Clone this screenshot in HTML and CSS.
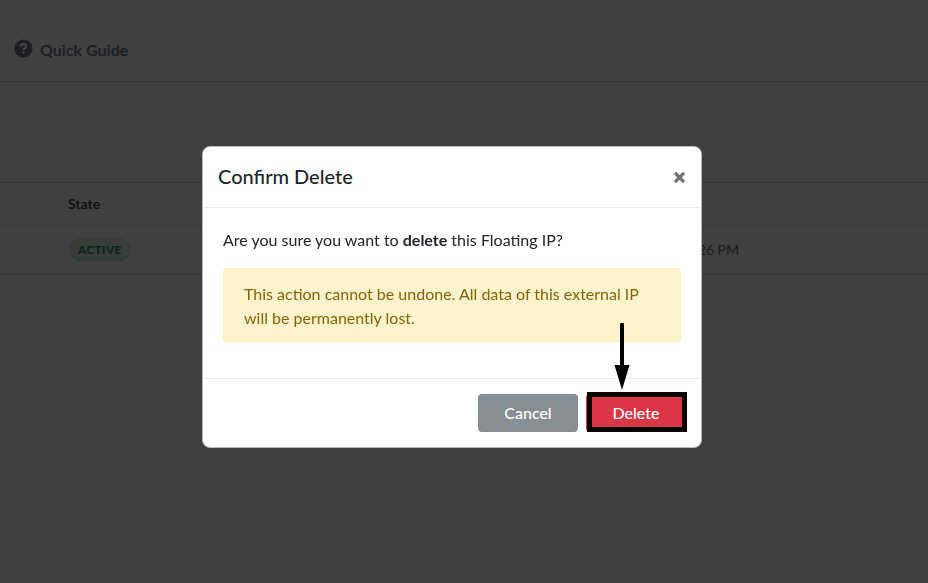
FILE: index.html
```html
<!DOCTYPE html>
<html lang="en">
<head>
    <meta charset="UTF-8">
    <meta name="viewport" content="width=device-width, initial-scale=1.0">
    <title>Floating IP</title>
    <link rel="stylesheet" href="styles.css">
</head>
<body>
    <header class="top-bar">
        <a class="guide-link" href="#">
            <svg class="guide-icon" viewBox="0 0 20 20" aria-hidden="true">
                <circle cx="10" cy="10" r="9.500" fill="#1c1e21"/>
                <path d="M7.300 8a2.700 2.700 0 0 1 5.400-.2c0 1.700-2.700 1.900-2.700 3.600" fill="none" stroke="#4a4a4a" stroke-width="2"/>
                <circle cx="10" cy="14.300" r="1.200" fill="#4a4a4a"/>
            </svg>
            Quick Guide
        </a>
    </header>

    <section class="ip-table">
        <div class="ip-row ip-head">
            <span>State</span>
        </div>
        <div class="ip-row">
            <span class="state-pill">ACTIVE</span>
            <span class="ip-date">Jan 12, 2024, 12:26 PM</span>
        </div>
    </section>

    <div class="modal-layer">
        <div class="modal">
            <div class="modal-header">
                <h2>Confirm Delete</h2>
                <button class="close-btn" type="button" aria-label="Close">
                    <svg viewBox="0 0 12 12" aria-hidden="true">
                        <path d="M1.800 1.800l8.400 8.400M10.200 1.800l-8.400 8.400" stroke="#6f7276" stroke-width="3"/>
                    </svg>
                </button>
            </div>
            <div class="modal-body">
                <p>Are you sure you want to <strong>delete</strong> this Floating IP?</p>
                <div class="alert">This action cannot be undone. All data of this external IP will be permanently lost.</div>
            </div>
            <div class="modal-footer">
                <button class="btn btn-cancel" type="button">Cancel</button>
                <button class="btn btn-delete" type="button">Delete</button>
                <svg class="arrow" viewBox="0 0 16 68" aria-hidden="true">
                    <path d="M8 1.500V46" stroke="#000" stroke-width="4" stroke-linecap="round"/>
                    <path d="M0.500 42H15.500L8 67z" fill="#000"/>
                </svg>
            </div>
        </div>
    </div>
</body>
</html>
```

FILE: styles.css
```css
*, *::before, *::after
{
    box-sizing: border-box;
    margin: 0;
    padding: 0;
}
html, body
{
    height: 100%;
}
body
{
    background-color: #404040;
    font-family: "Lato", "Liberation Sans", sans-serif;
    overflow: hidden;
}
.top-bar
{
    height: 82px;
    padding: 18px 14px 0;
    display: flex;
    align-items: center;
    border-bottom: 1px solid #353535;
}
.guide-link
{
    display: flex;
    align-items: center;
    gap: 7px;
    color: #1c1e22;
    font-size: 16px;
    font-weight: 700;
    text-decoration: none;
}
.guide-icon
{
    width: 19px;
    height: 19px;
    margin-top: -2px;
}
.ip-table
{
    margin-top: 100px;
    border-top: 1px solid #353535;
    border-bottom: 1px solid #353535;
}
.ip-row
{
    display: flex;
    align-items: center;
    justify-content: space-between;
    height: 48px;
    padding: 0 189px 2px 68px;
    color: #101112;
    font-size: 14px;
}
.ip-head
{
    height: 43px;
    border-bottom: 1px solid #3a3a3a;
    font-weight: 700;
}
.state-pill
{
    margin-left: 1px;
    padding: 4px 9px;
    border-radius: 12px;
    background-color: #363c38;
    color: #0a2014;
    font-size: 12px;
    font-weight: 700;
    letter-spacing: 0.3px;
}
.ip-date
{
    color: #1a1b1c;
}
.modal-layer
{
    position: fixed;
    inset: 0;
    padding: 146px 24px 0 0;
    display: flex;
    justify-content: center;
    align-items: flex-start;
}
.modal
{
    width: 500px;
    height: 302px;
    display: flex;
    flex-direction: column;
    background-color: #fff;
    border: 1px solid #b8b8b8;
    border-radius: 8px;
}
.modal-header
{
    height: 61px;
    padding: 0 15px 3px;
    display: flex;
    align-items: center;
    justify-content: space-between;
    border-bottom: 1px solid #e9ecef;
}
.modal-header h2
{
    color: #212529;
    font-size: 20px;
    font-weight: 500;
}
.close-btn
{
    width: 13px;
    height: 13px;
    margin-top: 3px;
    border: none;
    background: transparent;
    cursor: pointer;
}
.close-btn svg
{
    display: block;
}
.modal-body
{
    flex: 1;
    padding: 22px 20px 0;
    color: #212529;
    font-size: 16px;
}
.alert
{
    margin-top: 19px;
    padding: 13px 20px 11px;
    background-color: #fff3cd;
    border: 1px solid #ffeeba;
    border-radius: 4px;
    color: #856404;
    line-height: 24px;
}
.modal-footer
{
    position: relative;
    height: 69px;
    padding: 15px 15px 0 0;
    display: flex;
    justify-content: flex-end;
    align-items: flex-start;
    gap: 8px;
    border-top: 1px solid #e9ecef;
}
.btn
{
    width: 100px;
    height: 38px;
    padding-bottom: 2px;
    border-radius: 4px;
    border: none;
    color: #fff;
    font-family: inherit;
    font-size: 16px;
    font-weight: 500;
}
.btn-cancel
{
    background-color: #868e96;
}
.btn-delete
{
    position: relative;
    background-color: #dc3545;
}
/* black marker box drawn over the button */
.btn-delete::after
{
    content: "";
    position: absolute;
    inset: -2px -1px 0 1px;
    border: 5px solid #000;
}
.arrow
{
    position: absolute;
    left: 411px;
    top: -56px;
    width: 16px;
    height: 68px;
}
```
